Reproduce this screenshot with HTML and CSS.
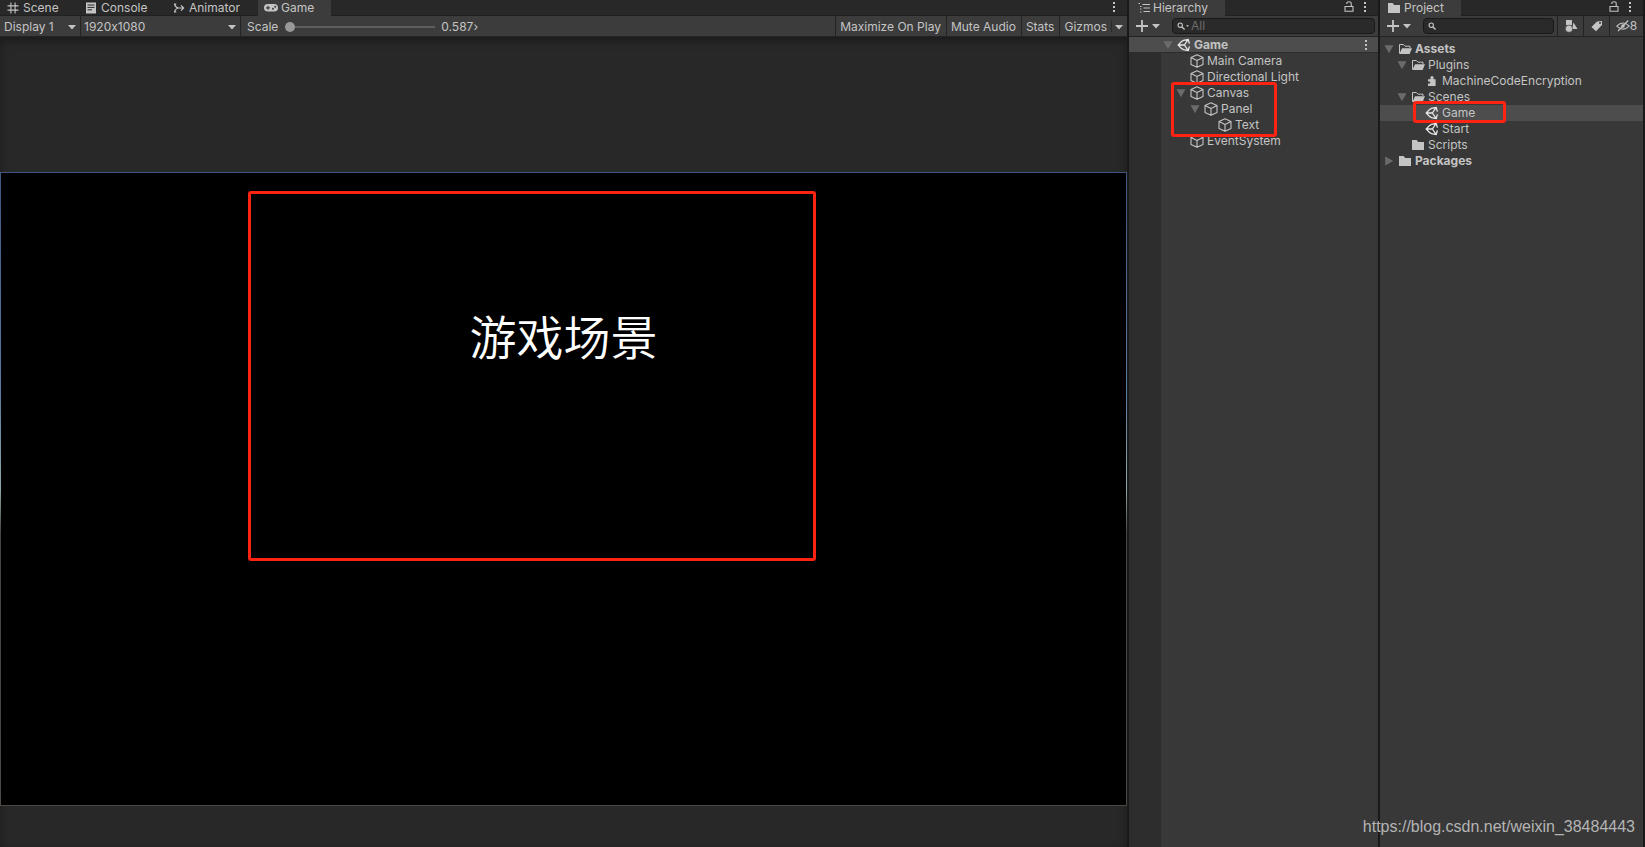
FILE: index.html
```html
<!DOCTYPE html>
<html lang="en">
<head>
<meta charset="utf-8">
<title>Editor</title>
<link rel="stylesheet" href="styles.css">
</head>
<body>
<svg class="defs" aria-hidden="true">
  <symbol id="cube" viewBox="0 0 14 14"><path d="M7 .8 13 3.6V10.4L7 13.2 1 10.4V3.6ZM1 3.6 7 6.6 13 3.6M7 6.6V13.2" fill="none" stroke="currentColor" stroke-width="1.1" stroke-linejoin="round"/></symbol>
  <symbol id="unity" viewBox="0 0 14 14"><path d="M4.6 3.4 1.2 7 4.6 10.6M1.2 7H7.4M6.2 2.4 11.2 1.4 12.4 5.6M6.2 11.6 11.2 12.6 12.4 8.4M7.4 7 11.2 1.4M7.4 7 11.2 12.6M4.4 3.6 6.8 2.2M4.4 10.4 6.8 11.8" fill="none" stroke="currentColor" stroke-width="1.3"/></symbol>
  <symbol id="folder" viewBox="0 0 14 14"><path d="M1 2h4.6l1.6 2H13v8H1Z" fill="currentColor"/></symbol>
  <symbol id="folder-open" viewBox="0 0 14 14"><path d="M1.5 11.5V2.5H5.4L7 4.2H12V6" fill="none" stroke="currentColor" stroke-width="1"/><path d="M4 6.2H14L11.6 12H1.4Z" fill="currentColor"/></symbol>
  <symbol id="plugin" viewBox="0 0 14 14"><path d="M3 12V9.6H4.6A1.2 1.2 0 0 0 4.6 7.4H3V5.2H5.4V3.6A1.6 1.6 0 0 1 8.6 3.6V5.2H10.6V12Z" fill="currentColor"/></symbol>
  <symbol id="down" viewBox="0 0 8 8"><path d="M0 2H8L4 6.4Z" fill="currentColor"/></symbol>
  <symbol id="fold" viewBox="0 0 10 10"><path d="M.5 1.2H9.5L5 9.2Z" fill="currentColor"/></symbol>
  <symbol id="plus" viewBox="0 0 12 12"><path d="M6 0V12M0 6H12" stroke="currentColor" stroke-width="1.8"/></symbol>
  <symbol id="dots" viewBox="0 0 4 12"><path d="M1 1h2v2H1ZM1 5h2v2H1ZM1 9h2v2H1Z" fill="currentColor"/></symbol>
  <symbol id="lock" viewBox="0 0 10 11"><path d="M1 5.5H9V10.3H1ZM2.8 3V2.2Q2.8.7 5 .7T7.2 2.2V5.5" fill="none" stroke="currentColor" stroke-width="1.1"/></symbol>
  <symbol id="lens" viewBox="0 0 10 10"><circle cx="3.6" cy="3.6" r="2.4" fill="none" stroke="currentColor" stroke-width="1.2"/><path d="M5.2 5.2 8.4 8.4" stroke="currentColor" stroke-width="1.6"/></symbol>
</svg>
<div class="editor">
  <main class="pane game">
    <nav class="tabs">
      <button class="tab scene"><svg class="i12" viewBox="0 0 12 12"><path d="M3.9 .5V11.5M8.1 .5V11.5M.5 3.9H11.5M.5 8.1H11.5" stroke="currentColor" stroke-width="1.1"/></svg>Scene</button>
      <button class="tab console"><svg class="i12" viewBox="0 0 12 12"><path d="M1 .5H11V11.5H1Z" fill="currentColor"/><path d="M2.5 3H9.5M2.5 5.4H9.5M2.5 7.8H7" stroke="#282828"/></svg>Console</button>
      <button class="tab animator"><svg class="i12" viewBox="0 0 12 12"><path d="M1.5 2.5Q3 6 6 6H10.5M1.5 9.5Q3 6 6 6M8 3.4 10.6 6 8 8.6M1 2.2H3.2M1 9.8H3.2" fill="none" stroke="currentColor" stroke-width="1.2"/></svg>Animator</button>
      <button class="tab current game-tab"><svg class="pad" viewBox="0 0 14 10"><rect x="0" y="1" width="14" height="7.6" rx="3.8" fill="currentColor"/><path d="M2 4.8H6M4 2.8V6.8" stroke="#3c3c3c" stroke-width="1.2"/><circle cx="9" cy="5.8" r="1" fill="#3c3c3c"/><circle cx="11.2" cy="3.8" r="1" fill="#3c3c3c"/></svg>Game</button>
      <span class="grow"></span>
      <button class="more" aria-label="Game tab menu"><svg><use href="#dots"/></svg></button>
    </nav>
    <div class="toolbar">
      <button class="drop display">Display 1<svg class="arrow"><use href="#down"/></svg></button>
      <button class="drop resolution">1920x1080<svg class="arrow"><use href="#down"/></svg></button>
      <label class="scale">Scale<input type="range" min="0" max="100" value="0"></label>
      <output class="value">0.587›</output>
      <span class="grow"></span>
      <button class="tool">Maximize On Play</button>
      <button class="tool">Mute Audio</button>
      <button class="tool">Stats</button>
      <button class="tool gizmos">Gizmos</button>
      <button class="gizmo-menu" aria-label="Gizmos menu"><svg class="arrow"><use href="#down"/></svg></button>
    </div>
    <div class="stage">
      <section class="view">
        <h1 lang="zh">游戏场景</h1>
        <span class="mark mark-view"></span>
      </section>
    </div>
  </main>

  <aside class="pane hierarchy">
    <nav class="tabs">
      <button class="tab current"><svg class="i12" viewBox="0 0 12 12"><path d="M4.5 2.5H12M5.5 6H12M5.5 9.5H12M.5 1.5H2M2 4.5H3.5M2 7H3.5M2 10H3.5" stroke="currentColor" stroke-width="1.2"/></svg>Hierarchy</button>
      <span class="grow"></span>
      <button class="more" aria-label="Lock hierarchy"><svg class="lock"><use href="#lock"/></svg></button>
      <button class="more" aria-label="Hierarchy menu"><svg><use href="#dots"/></svg></button>
    </nav>
    <div class="toolbar">
      <button class="add" aria-label="Create object"><svg class="i12"><use href="#plus"/></svg><svg class="arrow"><use href="#down"/></svg></button>
      <label class="search"><svg class="lens"><use href="#lens"/></svg><svg class="mini"><use href="#down"/></svg><input type="text" placeholder="All" aria-label="Search hierarchy"></label>
    </div>
    <div class="root"><svg class="fold"><use href="#fold"/></svg><svg class="icon bright"><use href="#unity"/></svg><b>Game</b><span class="grow"></span><button class="more" aria-label="Scene menu"><svg><use href="#dots"/></svg></button></div>
    <div class="objects">
      <ul class="tree">
        <li class="d1"><svg class="icon"><use href="#cube"/></svg>Main Camera</li>
        <li class="d1"><svg class="icon"><use href="#cube"/></svg>Directional Light</li>
        <li class="d1"><svg class="fold"><use href="#fold"/></svg><svg class="icon"><use href="#cube"/></svg>Canvas</li>
        <li class="d2"><svg class="fold"><use href="#fold"/></svg><svg class="icon"><use href="#cube"/></svg>Panel</li>
        <li class="d3"><svg class="icon"><use href="#cube"/></svg>Text</li>
        <li class="d1"><svg class="icon"><use href="#cube"/></svg>EventSystem</li>
      </ul>
      <span class="mark mark-canvas"></span>
    </div>
  </aside>

  <aside class="pane project">
    <nav class="tabs">
      <button class="tab current"><svg class="i14"><use href="#folder"/></svg>Project</button>
      <span class="grow"></span>
      <button class="more" aria-label="Lock project"><svg class="lock"><use href="#lock"/></svg></button>
      <button class="more" aria-label="Project menu"><svg><use href="#dots"/></svg></button>
    </nav>
    <div class="toolbar">
      <button class="add" aria-label="Create asset"><svg class="i12"><use href="#plus"/></svg><svg class="arrow"><use href="#down"/></svg></button>
      <label class="search"><svg class="lens"><use href="#lens"/></svg><input type="text" aria-label="Search project"></label>
      <button class="filter" aria-label="Search by type"><svg class="i14" viewBox="0 0 14 14"><path d="M2 1H8V6H2ZM9.5 3.5 13.5 10H8Z" fill="currentColor"/><circle cx="5" cy="9.7" r="3.6" fill="currentColor" stroke="#3c3c3c" stroke-width=".6"/></svg></button>
      <button class="filter" aria-label="Search by label"><svg class="i14" viewBox="0 0 14 14"><path d="M7 2.5 12 2 12 6 6 12.3 1.5 8Z" fill="currentColor"/><circle cx="10" cy="4" r="1" fill="#3c3c3c"/></svg></button>
      <button class="filter hidden-count"><svg class="i14" viewBox="0 0 14 14"><path d="M.8 7.2Q7 .8 13.2 7.2 7 13.2.8 7.2ZM2 12 12.2 1.5" fill="none" stroke="currentColor" stroke-width="1.1"/><circle cx="7" cy="7" r="1.8" fill="currentColor"/></svg>8</button>
    </div>
    <div class="assets">
      <ul class="tree">
        <li class="p0"><svg class="fold"><use href="#fold"/></svg><svg class="icon"><use href="#folder-open"/></svg><b>Assets</b></li>
        <li class="p1"><svg class="fold"><use href="#fold"/></svg><svg class="icon"><use href="#folder-open"/></svg>Plugins</li>
        <li class="p2"><svg class="icon"><use href="#plugin"/></svg>MachineCodeEncryption</li>
        <li class="p1"><svg class="fold"><use href="#fold"/></svg><svg class="icon"><use href="#folder-open"/></svg>Scenes</li>
        <li class="p2 selected"><svg class="icon bright"><use href="#unity"/></svg>Game<span class="mark mark-asset"></span></li>
        <li class="p2"><svg class="icon bright"><use href="#unity"/></svg>Start</li>
        <li class="p1"><svg class="icon"><use href="#folder"/></svg>Scripts</li>
        <li class="p0"><svg class="fold closed"><use href="#fold"/></svg><svg class="icon"><use href="#folder"/></svg><b>Packages</b></li>
      </ul>
    </div>
  </aside>
  <a class="credit" href="https://blog.csdn.net/weixin_38484443">https://blog.csdn.net/weixin_38484443</a>
</div>
</body>
</html>
```
FILE: styles.css
```css
* { box-sizing: border-box; }
body {
  margin: 0;
  background: #191919;
  color: #c4c4c4;
  font: 12px/16px Inter, "Noto Sans", sans-serif;
  font-feature-settings: "calt" 0;
}
button, input {
  margin: 0;
  padding: 0;
  border: 0;
  background: none;
  color: inherit;
  font: inherit;
  font-feature-settings: inherit;
}
svg { display: block; flex: none; }
.defs { position: absolute; width: 0; height: 0; }
.grow { flex: 1; }
.editor {
  position: relative;
  display: grid;
  grid-template-columns: minmax(0, 1127fr) minmax(0, 249fr) minmax(0, 263fr);
  gap: 2px;
  padding-right: 2px;
  min-height: 100vh;
}
.pane { display: flex; flex-direction: column; background: #383838; }

.tabs {
  display: flex;
  height: 16px;
  background: #282828;
  box-shadow: inset 0 -1px #202020;
}
.tab { display: flex; align-items: center; gap: 4px; white-space: nowrap; }
.tab.current { background: #3c3c3c; }
.scene { width: 79px; padding-left: 7px; }
.console { width: 86px; padding-left: 6px; }
.animator { width: 93px; padding-left: 8px; }
.game-tab { width: 73px; padding-left: 6px; gap: 3px; }
.i12 { width: 12px; height: 12px; }
.i14 { width: 14px; height: 14px; }
.pad { width: 14px; height: 10px; }
.more { display: flex; align-items: center; justify-content: center; width: 16px; height: 13px; }
.more svg { width: 4px; height: 12px; }
.more .lock { width: 10px; height: 11px; }
.game .tabs .more { margin-right: 5px; }

.toolbar {
  display: flex;
  align-items: center;
  height: 21px;
  background: #3c3c3c;
  border-bottom: 1px solid #232323;
}
.toolbar > button { height: 20px; white-space: nowrap; }
.game .toolbar > button, .scale, .value { padding-top: 2px; }
.arrow { width: 8px; height: 8px; }
.drop {
  display: flex;
  align-items: center;
  justify-content: space-between;
  padding: 0 4px;
  border-right: 1px solid #232323;
}
.display { width: 81px; }
.resolution { width: 160px; padding-left: 3px; }
.scale { display: flex; align-items: center; gap: 7px; padding-left: 6px; }
.scale input { appearance: none; width: 150px; height: 10px; }
.scale input::-webkit-slider-runnable-track {
  height: 2px;
  background: #5e5e5e;
}
.scale input::-webkit-slider-thumb {
  appearance: none;
  width: 10px;
  height: 10px;
  margin-top: -4px;
  border-radius: 50%;
  background: #999;
}
.value { padding-left: 6px; }
.tool { padding: 0 5px 0 4px; border-left: 1px solid #232323; }
.tool.gizmos { padding-right: 4px; }
.gizmo-menu { padding: 0 4px; background: linear-gradient(#2b2b2b, #2b2b2b) 0 4px / 1px 12px no-repeat; }

.stage {
  flex: 1;
  padding-top: 135px;
  background: #282828;
  box-shadow: inset 0 4px 8px #1c1c1c;
}
.view {
  position: relative;
  aspect-ratio: 16 / 9;
  padding-top: 127px;
  background: linear-gradient(#000, #000) padding-box, linear-gradient(#3f5680, #5a7ba0 35%, #8fa8a8 50%, #444 57%, #4c4742) border-box;
  border: 1px solid transparent;
  text-align: center;
}
.view h1 {
  margin: 0;
  color: #fff;
  font: 350 47px/70px "Noto Sans CJK SC", sans-serif;
}
.mark { position: absolute; border: 3px solid #ff2314; border-radius: 3px; }
.mark-view { left: 247px; top: 18px; width: 568px; height: 370px; }

.hierarchy .tab { width: 96px; padding-left: 9px; gap: 3px; }
.project .tab { width: 81px; padding-left: 7px; gap: 3px; }
.hierarchy .tabs, .project .tabs { padding-right: 5px; }
.add { display: flex; align-items: center; gap: 4px; padding: 0 6px 0 7px; }
.search {
  display: flex;
  flex: 1;
  align-items: center;
  height: 16px;
  min-width: 0;
  margin: 0 3px 0 6px;
  padding-left: 4px;
  background: #2a2a2a;
  border: 1px solid #191919;
  border-radius: 4px;
}
.search input { flex: 1; min-width: 0; height: 14px; padding-left: 2px; }
.search input::placeholder { color: #6c6c6c; opacity: 1; }
.lens { width: 9px; height: 9px; }
.mini { width: 3px; height: 4px; }
.filter {
  display: flex;
  flex: none;
  align-items: center;
  justify-content: center;
  width: 26px;
  border-left: 1px solid #232323;
}
.hidden-count { width: 34px; }

.root {
  display: flex;
  align-items: center;
  height: 16px;
  padding: 0 4px 0 34px;
  background: #4d4d4d;
  border-bottom: 1px solid #2b2b2b;
}
.objects { position: relative; flex: 1; padding-left: 32px; background: linear-gradient(90deg, #2d2d2d 32px, #383838 32px); }
.assets { flex: 1; padding-top: 4px; }
.tree { margin: 0; padding: 0; list-style: none; }
.tree li { position: relative; display: flex; align-items: center; height: 16px; white-space: nowrap; }
.icon { width: 14px; height: 14px; margin-right: 3px; }
.bright { color: #e8e8e8; }
.fold { width: 10px; height: 10px; margin-right: 4px; color: #6b6b6b; }
.closed { transform: rotate(-90deg); }
.d1 { padding-left: 29px; }
.d2 { padding-left: 43px; }
.d3 { padding-left: 57px; }
.tree .fold { margin-left: -14px; }
.p0 { padding-left: 18px; }
.p1 { padding-left: 31px; }
.p2 { padding-left: 45px; }
.selected { background: #4d4d4d; }
.mark-canvas { left: 42px; top: 29px; width: 106px; height: 55px; }
.mark-asset { left: 33px; top: -4px; width: 93px; height: 22px; }
.credit {
  position: absolute;
  right: 10px;
  bottom: 8px;
  color: #b4b4b4;
  font: 16px/24px "Liberation Sans", sans-serif;
  text-decoration: none;
}
```
